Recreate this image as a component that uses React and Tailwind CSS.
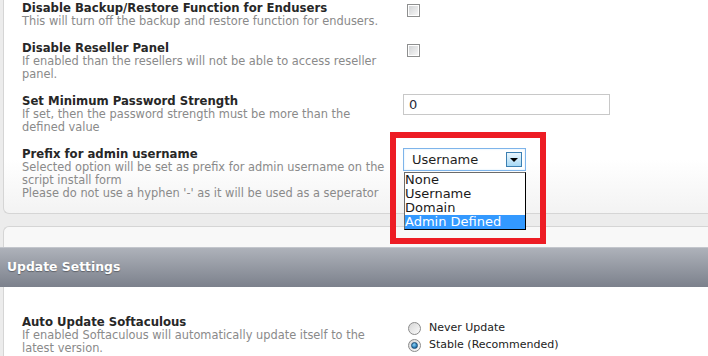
const ROWS = [
  {
    title: 'Disable Backup/Restore Function for Endusers',
    desc: ['This will turn off the backup and restore function for endusers.'],
    control: 'checkbox',
  },
  {
    title: 'Disable Reseller Panel',
    desc: ['If enabled than the resellers will not be able to access reseller', 'panel.'],
    control: 'checkbox',
  },
  {
    title: 'Set Minimum Password Strength',
    desc: ['If set, then the password strength must be more than the', 'defined value'],
    control: 'input',
  },
  {
    title: 'Prefix for admin username',
    desc: [
      'Selected option will be set as prefix for admin username on the',
      'script install form',
      "Please do not use a hyphen '-' as it will be used as a seperator",
    ],
    control: 'select',
  },
]

const OPTIONS = ['None', 'Username', 'Domain', 'Admin Defined']

function Checkbox() {
  return (
    <div className="mt-[2px] ml-[4px] w-[13px] h-[13px] border border-[#8e8f8f] p-px bg-white">
      <div className="w-full h-full bg-gradient-to-br from-[#d2d4d6] to-[#f6f6f6]" />
    </div>
  )
}

function Radio({ checked }) {
  return (
    <div className="w-[13px] h-[13px] shrink-0 rounded-full border border-[#8b8b8b] bg-gradient-to-br from-[#d6d6d6] to-[#fbfbfb] flex items-center justify-center">
      {checked && (
        <div className="w-[7px] h-[7px] rounded-full border border-[#1d4f78] bg-[radial-gradient(circle_at_40%_35%,#8fd3f7,#2a7fb8_60%,#13446b)]" />
      )}
    </div>
  )
}

function SelectBox() {
  return (
    <div className="relative w-[123px] h-[23px]">
      <div className="w-full h-full border border-[#7eb4ea] bg-white shadow-[inset_0_0_2px_#cfe6fb] flex items-center justify-between pl-[8px] pr-[3px]">
        <span className="text-[13px] text-[#1e1e1e] leading-none">Username</span>
        <div className="w-[16px] h-[15px] border border-[#3c7fb1] bg-gradient-to-b from-[#eaf6fd] to-[#a7d9f5] flex items-center justify-center">
          <div className="w-0 h-0 border-l-[4px] border-r-[4px] border-t-[4px] border-l-transparent border-r-transparent border-t-black" />
        </div>
      </div>
      <div className="absolute left-[1px] top-[24px] w-[122px] z-10 bg-white border border-[#6b6b6b] border-r-black border-b-black">
        {OPTIONS.map(o => (
          <div key={o}
            className={o === 'Admin Defined'
              ? 'h-[14px] leading-[14px] text-[13px] bg-[#3399ff] text-white'
              : 'h-[14px] leading-[14px] text-[13px] text-[#1a1a1a]'}>
            {o}
          </div>
        ))}
      </div>
    </div>
  )
}

function Control({ type }) {
  if (type === 'checkbox') return <Checkbox />
  if (type === 'input') {
    return (
      <div className="-mt-px w-[207px] h-[21px] border border-[#c8c8c8] bg-white flex items-center pl-[5px] text-[13px] text-[#2a2a3a]">
        0
      </div>
    )
  }
  return <SelectBox />
}

export default function App() {
  return (
    <div className="relative w-[708px] h-[356px] overflow-hidden bg-[#ececec] font-['DejaVu_Sans',Verdana,sans-serif]">

      {/* upper panel */}
      <div className="ml-[3px] -mr-[30px] border-l border-b border-[#d5d5d5] rounded-bl-[6px] bg-gradient-to-b from-white from-75% to-[#f3f3f3] pt-[2px] pb-[13px] pl-[18px]">
        <div className="flex flex-col gap-[14px]">
          {ROWS.map(r => (
            <div key={r.title} className="flex">
              <div className="w-[381px] shrink-0">
                <div className="text-[11.7px] leading-[13px] font-bold text-[#272727] whitespace-nowrap">{r.title}</div>
                {r.desc.map(d => (
                  <div key={d} className="text-[11.4px] leading-[13px] text-[#8a8a8a] whitespace-nowrap">{d}</div>
                ))}
              </div>
              <Control type={r.control} />
            </div>
          ))}
        </div>
      </div>

      {/* update settings panel */}
      <div className="mt-[12px] ml-[3px] -mr-[30px] border-l border-t border-[#d5d5d5] rounded-tl-[6px] bg-[#f8f8f8]">
        <div className="h-[20px]" />
        <div className="-ml-[4px] h-[40px] border-t border-[#c3c6cc] bg-gradient-to-b from-[#aeb2ba] to-[#7c818c] flex items-center pl-[7px]">
          <span className="text-[12.4px] font-bold text-white [text-shadow:0_1px_1px_rgba(0,0,0,0.35)]">Update Settings</span>
        </div>
        <div className="bg-white pt-[29px] pl-[18px] flex">
          <div className="w-[381px] shrink-0">
            <div className="text-[11.7px] leading-[13px] font-bold text-[#272727] whitespace-nowrap">Auto Update Softaculous</div>
            <div className="text-[11.4px] leading-[13px] text-[#8a8a8a] whitespace-nowrap">If enabled Softaculous will automatically update itself to the</div>
            <div className="text-[11.4px] leading-[13px] text-[#8a8a8a]">latest version.</div>
          </div>
          <div className="mt-[4px] ml-[5px] flex flex-col">
            <div className="h-[17px] flex items-center gap-[8px]">
              <Radio />
              <span className="text-[11px] text-[#222]">Never Update</span>
            </div>
            <div className="h-[17px] flex items-center gap-[8px]">
              <Radio checked />
              <span className="text-[11px] text-[#222]">Stable (Recommended)</span>
            </div>
            <div className="h-[17px] flex items-center">
              <Radio />
            </div>
          </div>
        </div>
      </div>

      {/* annotation */}
      <div className="absolute left-[390px] top-[132px] w-[156px] h-[112px] border-[6px] border-[#ed1c24] z-20" />
    </div>
  )
}
